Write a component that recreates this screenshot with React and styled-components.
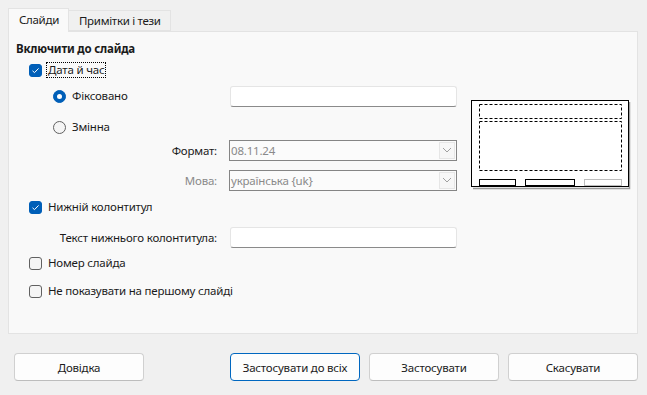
import React from "react";
import styled, { createGlobalStyle } from "styled-components";

const GlobalStyle = createGlobalStyle`
	html, body {
		margin: 0;
		padding: 0;
		background: #f0f0f0;
	}

	body {
		font-family: "Noto Sans", "DejaVu Sans", sans-serif;
		font-size: 11.5px;
		letter-spacing: -0.2px;
		color: #1b1b1b;
	}
`;

const Window = styled.div`
	width: 647px;
	height: 395px;
	box-sizing: border-box;
	padding-top: 8px;
	display: flex;
	flex-direction: column;
`;

const TabBar = styled.div`
	display: flex;
	align-items: flex-end;
	padding-left: 8px;
	height: 23px;
	position: relative;
	z-index: 1;
`;

const Tab = styled.div`
	box-sizing: border-box;
	height: ${({ $active }) => ($active ? "24px" : "21px")};
	margin-bottom: ${({ $active }) => ($active ? "-1px" : "0")};
	padding: 0 9px 0 10px;
	display: flex;
	align-items: center;
	background: ${({ $active }) => ($active ? "#f9f9f9" : "#f0f0f0")};
	border: 1px solid #e3e3e3;
	border-bottom: ${({ $active }) => ($active ? "none" : "1px solid #e3e3e3")};
	border-left: ${({ $active }) => ($active ? "1px solid #e3e3e3" : "none")};
	font-size: 11.5px;
	letter-spacing: -0.3px;
	color: #1b1b1b;
	padding-bottom: ${({ $active }) => ($active ? "2px" : "0")};
`;

const Panel = styled.div`
	margin: 0 9px 0 8px;
	height: 303px;
	box-sizing: border-box;
	background: #f9f9f9;
	border: 1px solid #e3e3e3;
	padding: 5px 7px 0;
`;

const Heading = styled.div`
	height: 22px;
	display: flex;
	align-items: center;
	font-weight: 700;
	font-size: 11.5px;
`;

const Body = styled.div`
	display: flex;
	gap: 14px;
`;

const Form = styled.div`
	width: 441px;
	display: flex;
	flex-direction: column;
`;

const Row = styled.div`
	height: 22px;
	margin-top: ${({ $top }) => $top}px;
	display: flex;
	align-items: center;
	padding-left: ${({ $indent }) => $indent || 0}px;
`;

const Option = styled.label`
	display: flex;
	align-items: center;
	gap: 4px;
	flex: ${({ $width }) => ($width ? `0 0 ${$width}px` : "0 0 auto")};
	box-sizing: border-box;
	padding-left: ${({ $indent }) => $indent || 0}px;
`;

const OptionText = styled.span`
	padding: 0 1px;
	line-height: 14px;
	border: 1px ${({ $focus }) => ($focus ? "dotted #000" : "solid transparent")};
`;

const Box = styled.span`
	width: 13px;
	height: 13px;
	box-sizing: border-box;
	border-radius: 3px;
	display: inline-flex;
	align-items: center;
	justify-content: center;
	background: ${({ $checked }) => ($checked ? "#005fb8" : "#f5f5f5")};
	border: 1px solid ${({ $checked }) => ($checked ? "#005fb8" : "#616161")};
`;

const Radio = styled.span`
	width: 13px;
	height: 13px;
	box-sizing: border-box;
	border-radius: 50%;
	display: inline-flex;
	align-items: center;
	justify-content: center;
	background: ${({ $checked }) => ($checked ? "#005fb8" : "#f5f5f5")};
	border: 1px solid ${({ $checked }) => ($checked ? "#005fb8" : "#616161")};

	&::after {
		content: "";
		display: ${({ $checked }) => ($checked ? "block" : "none")};
		width: 5px;
		height: 5px;
		border-radius: 50%;
		background: #fff;
	}
`;

const FieldLabel = styled.span`
	flex: 0 0 201px;
	text-align: right;
	color: ${({ $disabled }) => ($disabled ? "#8a8a8a" : "#1b1b1b")};
`;

const TextInput = styled.div`
	box-sizing: border-box;
	width: 227px;
	height: 21px;
	margin-left: ${({ $offset }) => $offset || 0}px;
	background: #fff;
	border: 1px solid #e5e5e5;
	border-bottom-color: #8a8a8a;
	border-radius: 3px;
`;

const Select = styled.div`
	box-sizing: border-box;
	width: 228px;
	height: 21px;
	margin-left: 12px;
	display: flex;
	align-items: center;
	justify-content: space-between;
	background: #fbfbfb;
	border: 1px solid #858585;
	padding: 0 1px 0 1px;
	color: #8a8a8a;
`;

const DropButton = styled.span`
	width: 16px;
	height: 17px;
	box-sizing: border-box;
	border: 1px solid #e6e6e6;
	background: #f7f7f7;
	display: flex;
	align-items: center;
	justify-content: center;
`;

const PreviewWrap = styled.div`
	margin-top: 41px;
	width: 160px;
	height: 90px;
`;

const ButtonBar = styled.div`
	display: flex;
	justify-content: space-between;
	padding: 19px 9px 0 14px;
`;

const ButtonGroup = styled.div`
	display: flex;
	gap: 9px;
`;

const Button = styled.button`
	width: 130px;
	height: 28px;
	box-sizing: border-box;
	font-family: "Noto Sans", "DejaVu Sans", sans-serif;
	font-size: 11.5px;
	letter-spacing: -0.2px;
	color: #1b1b1b;
	background: #fdfdfd;
	border: 1px solid ${({ $primary }) => ($primary ? "#0067c0" : "#d0d0d0")};
	border-bottom-color: ${({ $primary }) => ($primary ? "#0067c0" : "#bdbdbd")};
	border-radius: 4px;
	padding: 0;
`;

function Check({ checked }) {
	return (
		<Box $checked={checked}>
			{checked && (
				<svg width="9" height="9" viewBox="0 0 9 9">
					<path d="M1.5 4.8 L3.5 6.6 L7.6 2.4" fill="none" stroke="#fff" strokeWidth="1" />
				</svg>
			)}
		</Box>
	);
}

function Chevron() {
	return (
		<svg width="10" height="6" viewBox="0 0 10 6">
			<path d="M1 1 L5 5 L9 1" fill="none" stroke="#a0a0a0" strokeWidth="1" />
		</svg>
	);
}

function Preview() {
	return (
		<PreviewWrap>
			<svg width="160" height="90" viewBox="0 0 160 90">
				<path d="M158.5 2 V88.5 H2" fill="none" stroke="#9a9a9a" strokeWidth="1.5" />
				<rect x="0.5" y="0.5" width="157" height="86" fill="#fff" stroke="#000" />
				<rect x="8.5" y="4.5" width="142" height="14" fill="none" stroke="#000" strokeDasharray="3 2" />
				<rect x="8.5" y="21.5" width="142" height="49" fill="none" stroke="#000" strokeDasharray="3 2" />
				<rect x="8.5" y="79.5" width="36" height="6" fill="none" stroke="#000" />
				<rect x="54.5" y="79.5" width="49" height="6" fill="none" stroke="#000" />
				<rect x="113.5" y="79.5" width="37" height="6" fill="none" stroke="#bdbdbd" />
			</svg>
		</PreviewWrap>
	);
}

export default function App() {
	return (
		<>
			<GlobalStyle />
			<Window>
				<TabBar>
					<Tab $active>Слайди</Tab>
					<Tab>Примітки і тези</Tab>
				</TabBar>
				<Panel>
					<Heading>Включити до слайда</Heading>
					<Body>
						<Form>
							<Row $top={0} $indent={13}>
								<Option>
									<Check checked />
									<OptionText $focus>Дата й час</OptionText>
								</Option>
							</Row>
							<Row $top={4}>
								<Option $width={214} $indent={37}>
									<Radio $checked />
									<OptionText>Фіксовано</OptionText>
								</Option>
								<TextInput />
							</Row>
							<Row $top={9}>
								<Option $indent={37}>
									<Radio />
									<OptionText>Змінна</OptionText>
								</Option>
							</Row>
							<Row $top={1}>
								<FieldLabel>Формат:</FieldLabel>
								<Select>
									<span>08.11.24</span>
									<DropButton><Chevron /></DropButton>
								</Select>
							</Row>
							<Row $top={8}>
								<FieldLabel $disabled>Мова:</FieldLabel>
								<Select>
									<span>українська {"{uk}"}</span>
									<DropButton><Chevron /></DropButton>
								</Select>
							</Row>
							<Row $top={5} $indent={13}>
								<Option>
									<Check checked />
									<OptionText>Нижній колонтитул</OptionText>
								</Option>
							</Row>
							<Row $top={8}>
								<FieldLabel>Текст нижнього колонтитула:</FieldLabel>
								<TextInput $offset={13} />
							</Row>
							<Row $top={4} $indent={13}>
								<Option>
									<Check />
									<OptionText>Номер слайда</OptionText>
								</Option>
							</Row>
							<Row $top={6} $indent={13}>
								<Option>
									<Check />
									<OptionText>Не показувати на першому слайді</OptionText>
								</Option>
							</Row>
						</Form>
						<Preview />
					</Body>
				</Panel>
				<ButtonBar>
					<Button>Довідка</Button>
					<ButtonGroup>
						<Button $primary>Застосувати до всіх</Button>
						<Button>Застосувати</Button>
						<Button>Скасувати</Button>
					</ButtonGroup>
				</ButtonBar>
			</Window>
		</>
	);
}
